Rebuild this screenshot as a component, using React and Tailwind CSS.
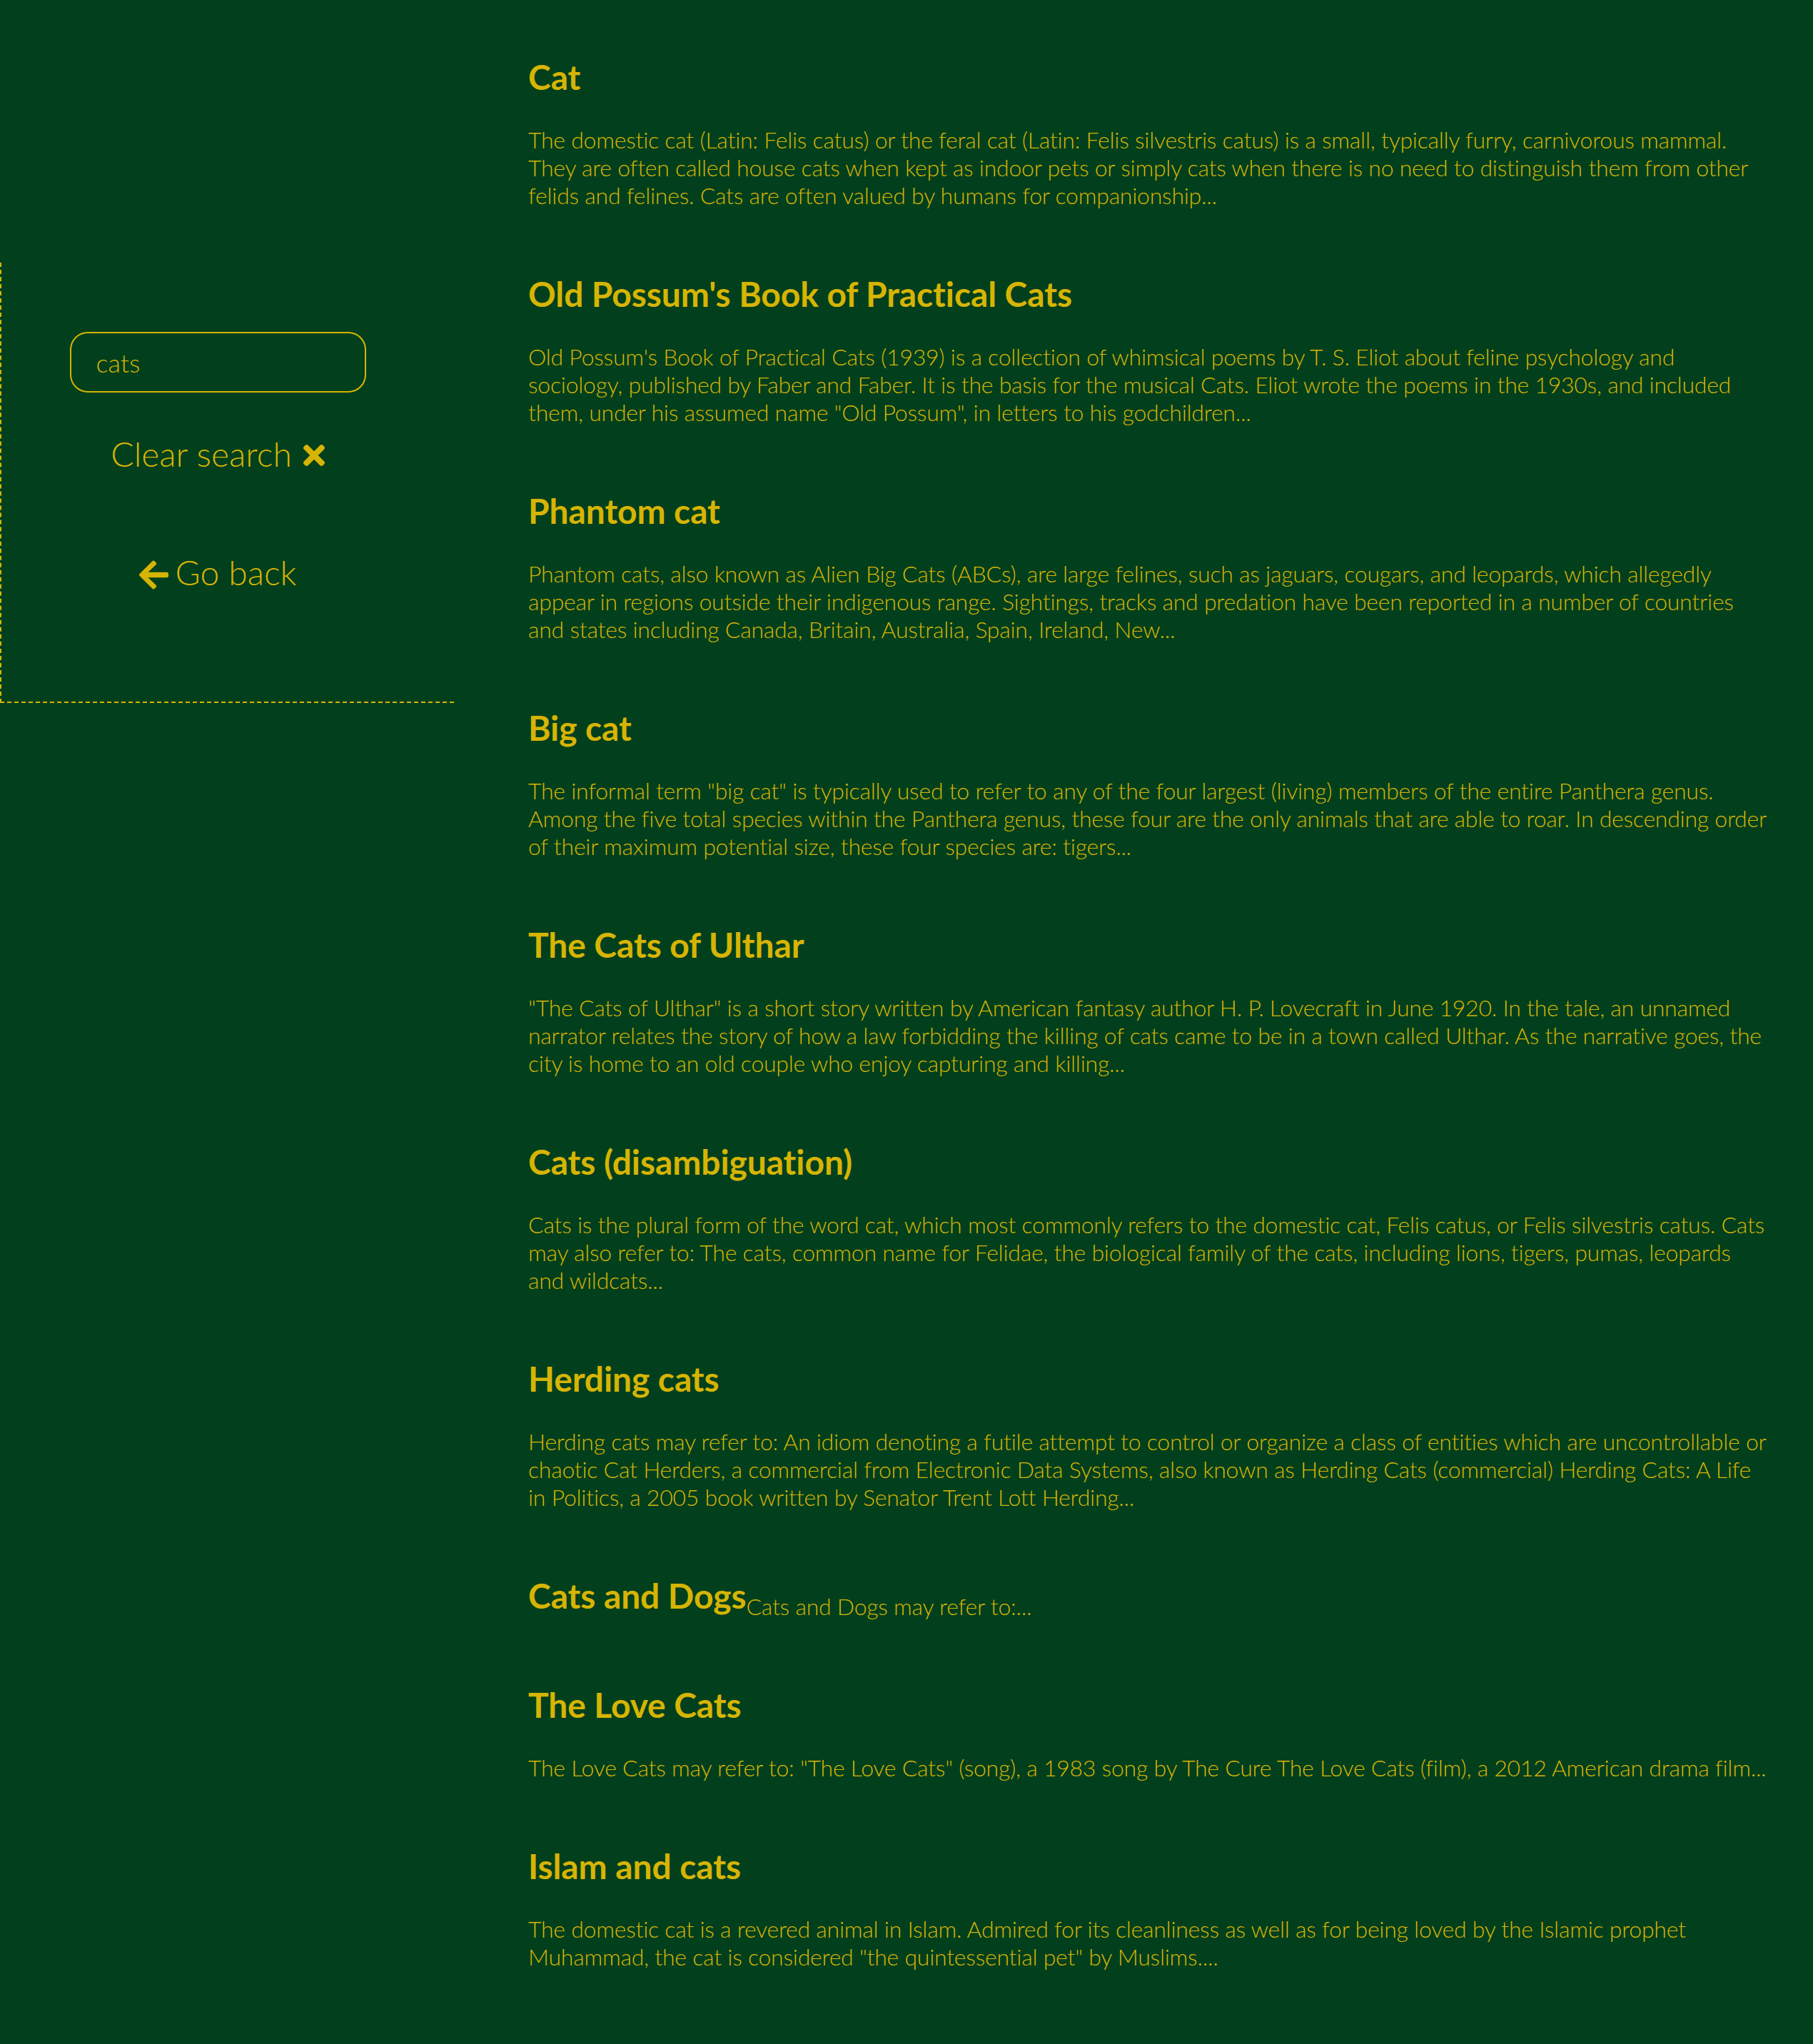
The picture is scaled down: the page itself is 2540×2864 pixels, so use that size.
import React, { useState } from 'react';
import { FaTimes, FaArrowLeft } from 'react-icons/fa';

const results = [
  {
    title: 'Cat',
    text: 'The domestic cat (Latin: Felis catus) or the feral cat (Latin: Felis silvestris catus) is a small, typically furry, carnivorous mammal. They are often called house cats when kept as indoor pets or simply cats when there is no need to distinguish them from other felids and felines. Cats are often valued by humans for companionship...',
  },
  {
    title: "Old Possum's Book of Practical Cats",
    text: 'Old Possum\'s Book of Practical Cats (1939) is a collection of whimsical poems by T. S. Eliot about feline psychology and sociology, published by Faber and Faber. It is the basis for the musical Cats. Eliot wrote the poems in the 1930s, and included them, under his assumed name "Old Possum", in letters to his godchildren...',
  },
  {
    title: 'Phantom cat',
    text: 'Phantom cats, also known as Alien Big Cats (ABCs), are large felines, such as jaguars, cougars, and leopards, which allegedly appear in regions outside their indigenous range. Sightings, tracks and predation have been reported in a number of countries and states including Canada, Britain, Australia, Spain, Ireland, New...',
  },
  {
    title: 'Big cat',
    text: 'The informal term "big cat" is typically used to refer to any of the four largest (living) members of the entire Panthera genus. Among the five total species within the Panthera genus, these four are the only animals that are able to roar. In descending order of their maximum potential size, these four species are: tigers...',
  },
  {
    title: 'The Cats of Ulthar',
    text: '"The Cats of Ulthar" is a short story written by American fantasy author H. P. Lovecraft in June 1920. In the tale, an unnamed narrator relates the story of how a law forbidding the killing of cats came to be in a town called Ulthar. As the narrative goes, the city is home to an old couple who enjoy capturing and killing...',
  },
  {
    title: 'Cats (disambiguation)',
    text: 'Cats is the plural form of the word cat, which most commonly refers to the domestic cat, Felis catus, or Felis silvestris catus. Cats may also refer to: The cats, common name for Felidae, the biological family of the cats, including lions, tigers, pumas, leopards and wildcats...',
  },
  {
    title: 'Herding cats',
    text: 'Herding cats may refer to: An idiom denoting a futile attempt to control or organize a class of entities which are uncontrollable or chaotic Cat Herders, a commercial from Electronic Data Systems, also known as Herding Cats (commercial) Herding Cats: A Life in Politics, a 2005 book written by Senator Trent Lott Herding...',
  },
  {
    title: 'Cats and Dogs',
    text: 'Cats and Dogs may refer to:...',
  },
  {
    title: 'The Love Cats',
    text: 'The Love Cats may refer to: "The Love Cats" (song), a 1983 song by The Cure The Love Cats (film), a 2012 American drama film...',
  },
  {
    title: 'Islam and cats',
    text: 'The domestic cat is a revered animal in Islam. Admired for its cleanliness as well as for being loved by the Islamic prophet Muhammad, the cat is considered "the quintessential pet" by Muslims....',
  },
];

const App = () => {
  const [query, setQuery] = useState('cats');

  return (
    <div className="min-h-screen bg-[#02401d] text-[#d7b404] font-['Lato',sans-serif] font-light flex">
      {/* Sidebar */}
      <div className="w-[636px] shrink-0 self-start mt-[368px] h-[617px] border-l-2 border-b-2 border-dashed border-[#d7b404] flex flex-col items-center pr-[28px]">
        <input
          type="text"
          value={query}
          onChange={(e) => setQuery(e.target.value)}
          className="mt-[97px] w-[415px] h-[85px] border-2 border-[#d7b404] rounded-[25px] bg-transparent text-[36px] leading-[normal] pl-[35px] outline-none"
        />
        <button
          onClick={() => setQuery('')}
          className="mt-[57px] flex items-center gap-[16px] text-[48px] leading-[normal]"
        >
          <span>Clear search</span>
          <FaTimes className="w-[30px] h-[44px] mt-[5px]" />
        </button>
        <button className="mt-[109px] flex items-center gap-[10px] text-[48px] leading-[normal]">
          <FaArrowLeft className="w-[41px] h-[47px] mt-[7px]" />
          <span>Go back</span>
        </button>
      </div>

      {/* Results */}
      <div className="flex-1 pl-[104px] pr-[60px] pt-[79px]">
        {results.map((item) => (
          <div key={item.title} className="flex flex-wrap mb-[58px]">
            <h2 className="text-[48px] font-bold leading-[normal] tracking-[-0.1px] mb-[16px]">{item.title}</h2>
            <p className="text-[32px] font-light leading-[normal] tracking-[-0.25px] mt-[24px] mb-[32px]">{item.text}</p>
          </div>
        ))}
      </div>
    </div>
  );
};

export default App;
